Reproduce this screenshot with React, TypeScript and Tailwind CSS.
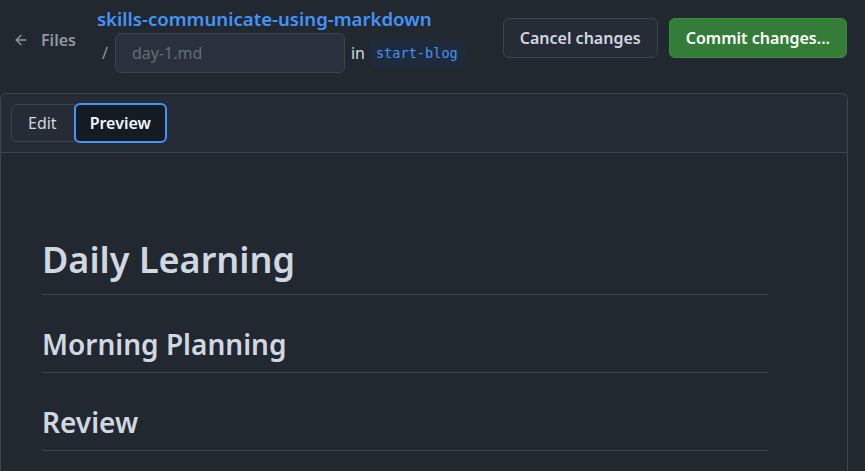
import { ArrowLeft } from "lucide-react";

const headings = [
  { text: "Daily Learning", size: "text-[36px] pb-[12px] mb-[32px]" },
  { text: "Morning Planning", size: "text-[28px] pb-[10px] mb-[32px]" },
  { text: "Review", size: "text-[28px] pb-[10px] mb-[32px]" },
];

export default function App() {
  return (
    <div className="w-[865px] h-[471px] overflow-hidden bg-[#212830] text-[#d1d7e0] [font-family:'Noto_Sans',sans-serif]">
      {/* Top bar */}
      <header className="flex items-start h-[93px] pl-[13px] pr-[18px]">
        <a className="flex items-center gap-[12px] mt-[28px] text-[#9198a1]">
          <ArrowLeft size={16} strokeWidth={2} />
          <span className="text-[16px] font-semibold">Files</span>
        </a>
        <div className="ml-[21px] flex flex-col mt-[7px]">
          <span className="text-[18.6px] font-semibold text-[#4493f8] leading-[24px]">
            skills-communicate-using-markdown
          </span>
          <div className="flex items-center mt-[2px]">
            <span className="text-[16px] text-[#9198a1] ml-[5px] mr-[7px]">/</span>
            <div className="w-[230px] h-[40px] flex items-center px-[16px] rounded-[6px] bg-[#2a313c] border border-[#3d444d] text-[16px] text-[#656c76]">
              day-1.md
            </div>
            <span className="ml-[6px] text-[16px]">in</span>
            <span className="ml-[4px] px-[7px] h-[27px] flex items-center rounded-[6px] bg-[#1f2b3d] text-[#4493f8] text-[13.6px] [font-family:'DejaVu_Sans_Mono',monospace]">
              start-blog
            </span>
          </div>
        </div>
        <div className="ml-auto flex gap-[11px] mt-[18px]">
          <button className="h-[40px] px-[16px] rounded-[6px] bg-[#262c36] border border-[#3d444d] text-[16px] font-semibold text-[#d1d7e0]">
            Cancel changes
          </button>
          <button className="h-[40px] px-[16px] rounded-[6px] bg-[#347d39] border border-[#3d8c41] text-[16px] font-semibold text-white">
            Commit changes...
          </button>
        </div>
      </header>

      {/* Editor panel */}
      <section className="w-[848px] h-[400px] border border-[#3d444d] rounded-t-[6px] border-b-0">
        <div className="h-[59px] bg-[#262c36] border-b border-[#3d444d] rounded-t-[6px] flex items-center pl-[10px]">
          <div className="flex items-center">
            <button className="h-[38px] pl-[16px] pr-[17px] rounded-l-[6px] bg-[#262c36] border border-[#3d444d] text-[16px] text-[#d1d7e0]">
              Edit
            </button>
            <button className="-ml-[1px] h-[40px] px-[14px] rounded-[6px] bg-[#151b23] border-2 border-[#4493f8] text-[16px] font-semibold text-[#f0f6fc]">
              Preview
            </button>
          </div>
        </div>
        <div className="pl-[41px] pt-[84px] w-[767px]">
          {headings.map((h) => (
            <h2
              key={h.text}
              className={`${h.size} font-semibold leading-[1.25] border-b border-[#3d444d] text-[#d1d7e0]`}
            >
              {h.text}
            </h2>
          ))}
        </div>
      </section>
    </div>
  );
}
